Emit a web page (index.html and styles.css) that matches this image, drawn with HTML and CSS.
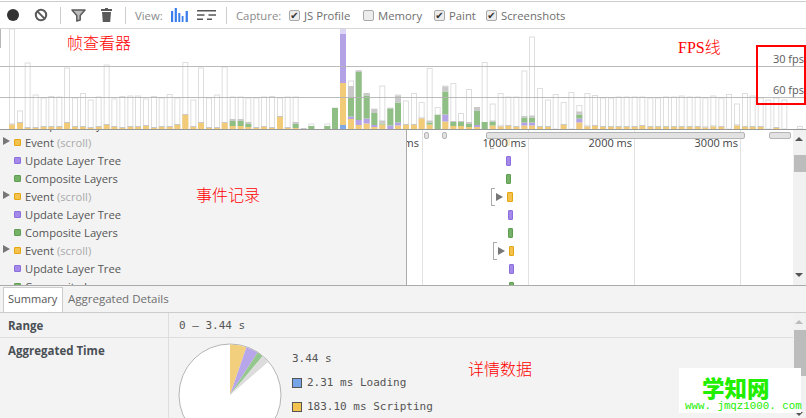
FILE: index.html
```html
<!DOCTYPE html>
<html lang="zh">
<head>
<meta charset="utf-8">
<title>Timeline</title>
<link rel="stylesheet" href="styles.css">
</head>
<body>
<div class="app">
  <div class="toolbar">
    <svg class="tool tool-record" width="14" height="14" viewBox="0 0 14 14"><circle cx="7" cy="7" r="6" fill="#333"/></svg>
    <svg class="tool tool-clear" width="14" height="14" viewBox="0 0 14 14"><circle cx="7" cy="7" r="5.2" fill="none" stroke="#5a5a5a" stroke-width="2"/><path d="M3.4 3.4l7.2 7.2" stroke="#5a5a5a" stroke-width="2"/></svg>
    <span class="sep sep-a"></span>
    <svg class="tool tool-filter" width="15" height="13" viewBox="0 0 15 13"><path d="M1 1h13L9.2 6.5V11L5.8 12V6.5z" fill="#bcbcbc" stroke="#5a5a5a" stroke-width="1.5" stroke-linejoin="round"/></svg>
    <svg class="tool tool-trash" width="11" height="14" viewBox="0 0 11 14"><path d="M4 0h3v1h4v2H0V1h4z" fill="#5a5a5a"/><path d="M1 4h9l-.8 10H1.8z" fill="#5a5a5a"/></svg>
    <span class="sep sep-b"></span>
    <span class="tlabel view-label">View:</span>
    <svg class="tool tool-bars" width="18" height="14" viewBox="0 0 18 14"><path d="M0 3h2.2v11H0zM3.7 0h2.2v14H3.7zM7.3 5h2v9h-2zM10.7 8h1.8v6h-1.8zM14.6 3h2.3v11h-2.3z" fill="#3b7ded"/></svg>
    <svg class="tool tool-flame" width="19" height="10" viewBox="0 0 19 10"><path d="M0 0h19v1.6H0zM0 4.2h7.5v1.6H0zM11.5 4.2H19v1.6h-7.5zM0 8.4h6v1.6H0zM10 8.4h5v1.6h-5z" fill="#555"/></svg>
    <span class="sep sep-c"></span>
    <span class="tlabel capture-label">Capture:</span>
    <label class="check c-js"><span class="box on">✔</span>JS Profile</label>
    <label class="check c-mem"><span class="box"></span>Memory</label>
    <label class="check c-paint"><span class="box on">✔</span>Paint</label>
    <label class="check c-shots"><span class="box on">✔</span>Screenshots</label>
  </div>

  <div class="overview">
    <svg id="chart" class="chart" width="806" height="100" viewBox="0 0 806 100"></svg>
    <span class="fps fps-30">30 fps</span>
    <span class="fps fps-60">60 fps</span>
  </div>

  <div class="timeline">
    <div class="rows">
      <div class="row"><i class="dot green"></i>Composite Layers</div>
      <div class="row"><b class="tri"></b><i class="dot yellow"></i>Event <em>(scroll)</em></div>
      <div class="row"><i class="dot purple"></i>Update Layer Tree</div>
      <div class="row"><i class="dot green"></i>Composite Layers</div>
      <div class="row"><b class="tri"></b><i class="dot yellow"></i>Event <em>(scroll)</em></div>
      <div class="row"><i class="dot purple"></i>Update Layer Tree</div>
      <div class="row"><i class="dot green"></i>Composite Layers</div>
      <div class="row"><b class="tri"></b><i class="dot yellow"></i>Event <em>(scroll)</em></div>
      <div class="row"><i class="dot purple"></i>Update Layer Tree</div>
      <div class="row"><i class="dot green"></i>Composite Layers</div>
    </div>
    <div class="grid">
      <span class="gl g0"></span><span class="gl g1"></span><span class="gl g2"></span><span class="gl g3"></span>
      <span class="mark faint m0"></span>
      <span class="bracket b0"></span>
      <span class="tick t0">ms</span><span class="tick t1">1000 ms</span><span class="tick t2">2000 ms</span><span class="tick t3">3000 ms</span>
      <span class="pill p3"></span><span class="pill p4"></span><span class="pill p5"></span><span class="pill p6"></span>
      <span class="mark purple m1"></span><span class="mark green m2"></span>
      <span class="bracket b1"></span><b class="tri tg1"></b><span class="mark yellow m3"></span>
      <span class="mark purple m4"></span><span class="mark green m5"></span>
      <span class="bracket b2"></span><b class="tri tg2"></b><span class="mark yellow m6"></span>
      <span class="mark purple m7"></span><span class="mark green m8"></span>
    </div>
    <div class="vscroll">
      <b class="arrow up"></b><span class="thumb thumb-a"></span><b class="arrow down"></b>
    </div>
  </div>

  <div class="details">
    <div class="tabs">
      <span class="tab active">Summary</span>
      <span class="tab">Aggregated Details</span>
    </div>
    <div class="panel">
      <div class="sections">
        <div class="section range">
          <div class="key">Range</div>
          <div class="val mono">0 – 3.44 s</div>
        </div>
        <div class="section agg">
          <div class="key">Aggregated Time</div>
          <div class="val pie-wrap">
            <svg class="pie" width="104" height="104" viewBox="-52 -52 104 104">
              <circle r="51" fill="#fff" stroke="#b5b5b5"/>
              <path d="M0 0V-50.5A50.5 50.5 0 0 1 16.4-47.8z" fill="#f2cf7c"/>
              <path d="M0 0L16.4-47.8A50.5 50.5 0 0 1 27.5-42.4z" fill="#b8a6ea"/>
              <path d="M0 0L27.5-42.4A50.5 50.5 0 0 1 32.5-38.7z" fill="#94c78d"/>
              <path d="M0 0L32.5-38.7A50.5 50.5 0 0 1 38.1-33.1z" fill="#dcdcdc"/>
            </svg>
            <div class="legend mono">
              <div class="total">3.44 s</div>
              <div class="litem"><i class="swatch blue"></i>2.31 ms Loading</div>
              <div class="litem"><i class="swatch yellow"></i>183.10 ms Scripting</div>
            </div>
          </div>
        </div>
      </div>
      <div class="vscroll vscroll-b">
        <b class="arrow up"></b><span class="thumb thumb-b"></span><b class="arrow down"></b>
      </div>
    </div>
  </div>

  <div class="note n-frames">帧查看器</div>
  <div class="note n-fps">FPS线</div>
  <div class="note n-events">事件记录</div>
  <div class="note n-details">详情数据</div>
  <div class="redbox"></div>
  <div class="watermark">
    <div class="wm-title">学知网</div>
    <div class="wm-url">www. jmqz1000. com</div>
  </div>
</div>
<script src="chart.js"></script>
</body>
</html>
```
FILE: styles.css
```css
* { box-sizing: border-box; }
html, body { margin: 0; padding: 0; background: #fff; }
body { font-family: "Open Sans", "Noto Sans", sans-serif; }
.app { position: relative; width: 806px; height: 418px; overflow: hidden; display: flex; flex-direction: column; }

.toolbar { height: 28px; margin-top: 1px; border-top: 1px solid #ccc; border-bottom: 1px solid #d6d6d6; display: flex; align-items: center; flex: none; background: #fff; color: #7a7a7a; font-size: 11px; }
.tool { flex: none; display: block; }
.tool-record { margin-left: 6px; }
.tool-clear { margin-left: 14px; }
.sep { width: 1px; height: 17px; background: #ccc; flex: none; }
.sep-a { margin-left: 12px; }
.tool-filter { margin-left: 10px; }
.tool-trash { margin-left: 15px; }
.sep-b { margin-left: 13px; }
.view-label { margin-left: 9px; width: 28px; }
.tool-bars { margin-left: 8px; }
.tool-flame { margin-left: 8px; }
.sep-c { margin-left: 10px; }
.capture-label { margin-left: 9px; width: 45px; }
.tlabel { color: #8a8a8a; white-space: nowrap; font-size: 11.3px; }
.check { display: flex; align-items: center; white-space: nowrap; color: #6e6e6e; font-size: 11.3px; }
.box { width: 11px; height: 11px; border: 1px solid #a9a9a9; border-radius: 2px; background: #ececec; margin-right: 4px; font-size: 10px; line-height: 9px; text-align: center; color: #333; flex: none; font-family: "DejaVu Sans", sans-serif; }
.c-js { margin-left: 8px; width: 74px; }
.c-mem { width: 71px; }
.c-paint { width: 52px; }

.overview { position: relative; height: 101px; flex: none; background: #fff; border-bottom: 1px solid #999; }
.chart { display: block; }
.fps { position: absolute; right: 2px; font-size: 11px; color: #5a5a5a; line-height: 14px; }
.fps-30 { top: 23px; }
.fps-60 { top: 54px; }

.timeline { height: 156px; flex: none; display: flex; border-bottom: 1px solid #aaa; overflow: hidden; }
.rows { width: 407px; flex: none; background: #f3f3f3; border-right: 1px solid #aaa; overflow: hidden; color: #555; font-size: 11.2px; }
.row { height: 18px; padding-left: 14px; display: flex; align-items: center; white-space: nowrap; position: relative; top: -15px; }
.row em { font-style: normal; color: #aaa; margin-left: 3px; }
.dot { width: 7px; height: 7px; border-radius: 1px; margin-right: 4px; flex: none; border: 1px solid; }
.tri { width: 0; height: 0; border-left: 7px solid #777; border-top: 4px solid transparent; border-bottom: 4px solid transparent; }
.row .tri { position: absolute; left: 3px; top: 4px; }
.yellow { background: #f4c24e; border-color: #e5a50c; }
.purple { background: #a489ea; border-color: #8b6fdc; }
.green { background: #75b268; border-color: #5f9e52; }
.blue { background: #77a5e8; border-color: #5e8fd6; }

.grid { position: relative; flex: 1; background: #fff; overflow: hidden; }
.gl { position: absolute; top: 0; bottom: 0; width: 1px; background: #e2e2e2; }
.g0 { left: 15px; }
.g1 { left: 121px; }
.g2 { left: 227px; }
.g3 { left: 333px; }
.tick { position: absolute; top: 6px; font-size: 11px; line-height: 14px; color: #444; white-space: nowrap; }
.t0 { right: 374px; }
.t1 { right: 267px; }
.t2 { right: 161px; }
.t3 { right: 55px; }
.pill { position: absolute; top: 2px; height: 7px; background: #e2e2e2; border: 1px solid #b5b5b5; border-radius: 2px; z-index: 2; }
.p3 { left: 17px; width: 5px; }
.p4 { left: 35px; width: 5px; }
.p5 { left: 79px; width: 259px; }
.p6 { left: 362px; width: 22px; }
.mark { position: absolute; width: 5px; height: 10px; border-radius: 1px; border-width: 1px; border-style: solid; }
.m0 { left: 98px; top: 6px; background: #f8ebc9; border: 0; }
.m1 { left: 99px; top: 26px; }
.m2 { left: 99px; top: 44px; }
.m3 { left: 100px; top: 62px; width: 6px; }
.m4 { left: 101px; top: 80px; }
.m5 { left: 101px; top: 98px; }
.m6 { left: 102px; top: 116px; }
.m7 { left: 102px; top: 134px; }
.m8 { left: 102px; top: 152px; }
.bracket { position: absolute; width: 4px; height: 18px; border: 1px solid #aaa; border-right: 0; }
.b0 { left: 83px; top: 3px; height: 16px; border-color: #bbb; }
.b1 { left: 84px; top: 58px; }
.b2 { left: 86px; top: 112px; }
.grid .tri { position: absolute; }
.tg1 { left: 89px; top: 63px; }
.tg2 { left: 91px; top: 117px; }

.vscroll { width: 13px; flex: none; background: #f1f1f1; position: relative; }
.arrow { width: 0; height: 0; border-left: 4px solid transparent; border-right: 4px solid transparent; position: absolute; left: 2px; }
.arrow.up { border-bottom: 4px solid #555; top: 7px; }
.arrow.down { border-top: 4px solid #555; bottom: 8px; }
.thumb { position: absolute; left: 1px; right: 0; background: #bcbcbc; }
.thumb-a { top: 25px; height: 17px; }

.details { flex: 1; min-height: 0; background: #f3f3f3; display: flex; flex-direction: column; }
.tabs { height: 27px; flex: none; display: flex; align-items: flex-end; border-bottom: 1px solid #ccc; padding-left: 3px; font-size: 11.5px; color: #6e6e6e; }
.tab { height: 24px; padding: 0 5px; line-height: 22px; white-space: nowrap; }
.tab.active { background: #fff; border: 1px solid #ccc; border-bottom: 0; color: #555; width: 60px; height: 25px; font-size: 11px; padding: 0 4px; }
.panel { flex: 1; min-height: 0; display: flex; overflow: hidden; }
.sections { flex: 1; min-width: 0; }
.section { display: flex; }
.range { height: 25px; border-bottom: 1px solid #ddd; align-items: center; }
.key { width: 169px; flex: none; padding-left: 8px; font-size: 11.5px; font-weight: 700; color: #4a4f55; border-right: 1px solid #ddd; align-self: stretch; display: flex; align-items: center; }
.agg .key { align-items: flex-start; padding-top: 5px; }
.agg { height: 90px; }
.val { padding-left: 10px; }
.mono { font-family: "DejaVu Sans Mono", monospace; font-size: 11px; color: #555; }
.pie-wrap { display: flex; padding: 5px 0 0 9px; }
.pie { flex: none; display: block; }
.legend { margin-left: 10px; padding-top: 9px; }
.total { height: 24px; line-height: 14px; }
.litem { height: 24px; display: flex; line-height: 14px; white-space: nowrap; }
.swatch { width: 10px; height: 10px; border: 1px solid; margin: 2px 5px 0 0; flex: none; }
.vscroll-b .arrow.up { border-bottom-color: #bbb; top: 7px; }
.vscroll-b .arrow.down { bottom: 2px; }
.thumb-b { top: 17px; height: 46px; }

.note { position: absolute; color: #f00; font-size: 16px; line-height: 18px; white-space: nowrap; font-family: "Noto Sans CJK SC", sans-serif; font-weight: 300; }
.n-frames { left: 67px; top: 33px; }
.n-fps { left: 678px; top: 39px; font-family: "Liberation Serif", "Noto Sans CJK SC", serif; }
.n-events { left: 196px; top: 185px; }
.n-details { left: 468px; top: 359px; }
.redbox { position: absolute; left: 756px; top: 45px; width: 50px; height: 60px; border: 2px solid #f00; }
.watermark { position: absolute; left: 679px; top: 368px; width: 122px; height: 45px; background: #fff; color: #22ee00; }
.wm-title { font-family: "Noto Sans CJK SC", sans-serif; font-weight: 900; font-size: 22.5px; line-height: 26px; margin: 6px 0 0 23px; white-space: nowrap; }
.wm-url { font-family: "Liberation Mono", monospace; font-size: 10.8px; line-height: 12px; white-space: nowrap; margin-left: 6px; }
```
FILE: chart.js
```js
// Overview frame bars: [outline height, blue, yellow, purple, green, gray]
function s(o, f) { return f ? [o, 0, f - 1, 0, 0, 1] : [o, 0, 0, 0, 0, 0]; }
function m(o, y, p, g, c, b) { return [o, b || 0, y, p, g, c]; }
var bars = [
  s(100,5.5), s(18,7), s(66,2), s(34,2), s(31,3), s(32.5,3), s(32,3), s(61,7), s(31,3), s(35.5,3),
  s(29,2), s(32,3), s(64,5), s(30,3), s(32.5,2), s(33,3), s(33,3), s(30,4), s(32.5,2), s(31,3),
  s(34.5,3), s(31,5), s(66.5,15), s(29,3), s(61,7), s(31,2), s(34,2), s(62,7), m(32,3,0,5,2), m(32,3,0,5,2),
  m(31,2,0,3,2), s(31,2), s(32,3), s(32.5,2), s(31,13), s(32,2), m(32,1,0,4,2), m(1,0,0,0,1), m(5,0,0,3,0), s(0,0),
  m(5,0,0,3,0), m(21,0,0,21,0), m(100,42,54,0,0,4), m(48,10,2.5,19,11.5), m(58.5,4,5,48,1.5), m(35.5,5.5,5,23,2.5),
  m(20,2,2,12,4), m(43,4.5,0,1,3), m(21,0,3.5,17,.5), m(34,3.5,3,20,7),
  s(28,5), s(35.5,5), s(26.5,11.5), m(60.5,4.5,0,2,2), m(21.5,0,0,14,.5), m(43,7.5,7,23,5), m(45.5,3,0,4,1), m(15.5,3,0,4,1),
  m(39.5,2,0,3,2), m(21,2,2,14,4), m(66.5,0,0,7,0), m(25,3.5,0,4,1), s(35.5,3.5), s(32,4), s(32,3), m(58,3.5,3,5,1.5), m(92,3.5,3,5,2),
  s(40.5,3), s(29,3), s(34.5,0), s(26.5,5), s(36.5,0), m(23.5,6.5,4,4,3), s(35.5,3.5), s(33.5,4), s(31,3),
  s(31,3), s(32,3), s(32,3), s(32,3), s(32,4), s(31,3), s(31,3), s(32,3), s(32,3), s(33,3),
  s(32,3), s(32,3), s(31,2.5), s(33,3.5), s(31,3), s(34.5,0), s(25,4.5), s(35.5,3), s(33,3), s(31,3),
  s(29,0), m(31,1,0,0,1), s(29,0), s(0,0), s(2.5,0)
];
var colours = ["#7ea8e6", "#f2cb78", "#b3a2e6", "#8fbf85", "#c9c9c9"];
var NS = "http://www.w3.org/2000/svg";
var svg = document.getElementById("chart");
var BOTTOM = 100;
function rect(x, y, w, h, attrs) {
  var r = document.createElementNS(NS, "rect");
  r.setAttribute("x", x); r.setAttribute("y", y);
  r.setAttribute("width", w); r.setAttribute("height", h);
  for (var k in attrs) r.setAttribute(k, attrs[k]);
  svg.appendChild(r);
}
rect(0, 0, 1, 19, { fill: "#b8b8b8" });
bars.forEach(function (b, i) {
  var x = Math.round((9 + i * 7.88) * 3) / 3;
  if (b[0] > 2) rect(x + .5, BOTTOM - b[0], 5, b[0], { fill: "#fff", stroke: "#dedede" });
  var y = BOTTOM;
  for (var c = 1; c <= 5; c++) {
    if (!b[c]) continue;
    y -= b[c];
    rect(x, y, 6, b[c], { fill: colours[c - 1] });
  }
  if (i === 42) rect(x, 0, 6, 5, { fill: "#fff", "fill-opacity": .55 });
});
[37, 68].forEach(function (y) { rect(0, y, 806, 1, { fill: "#b4b4b4", "fill-opacity": .9 }); });
```
